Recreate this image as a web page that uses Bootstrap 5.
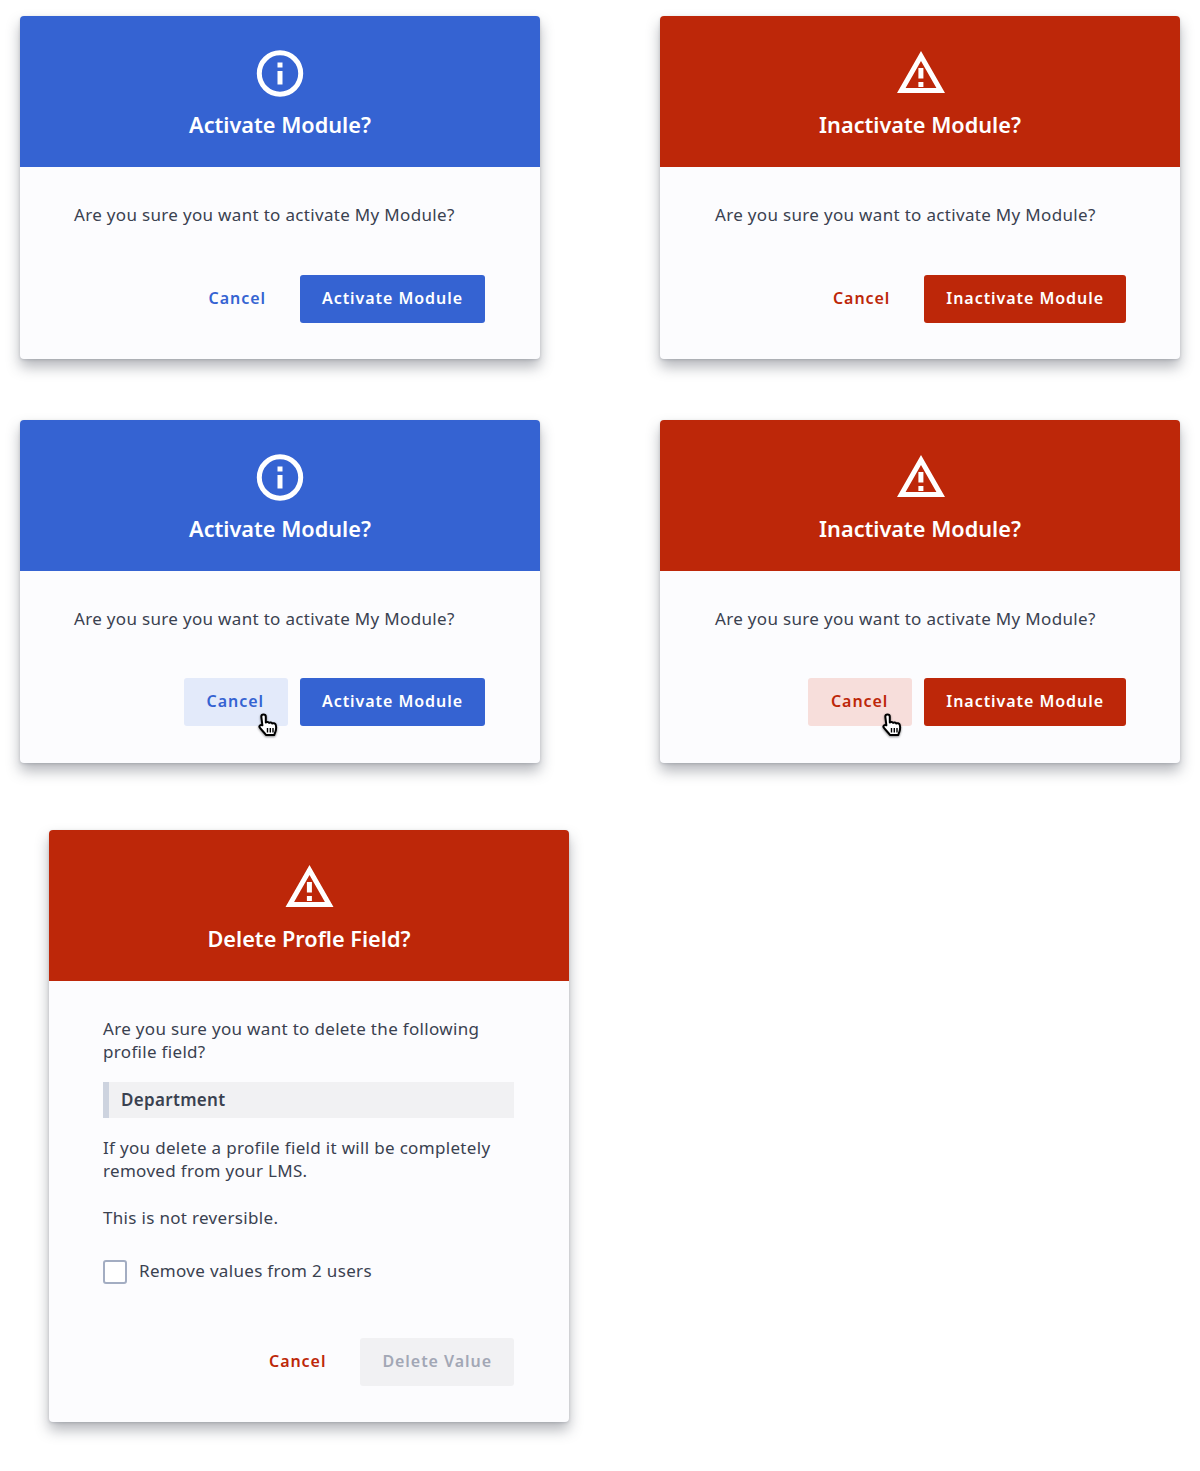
<!DOCTYPE html>
<html lang="en">
<head>
<meta charset="utf-8">
<title>Dialogs</title>
<link href="https://cdn.jsdelivr.net/npm/bootstrap@5.3.0/dist/css/bootstrap.min.css" rel="stylesheet">
<style>
body { margin: 0; background: #fff; font-family: "Noto Sans", sans-serif; color: #3a4150; }
.sheet { padding: 16px 20px 48px 20px; }
.duo { display: grid; grid-template-columns: 520px 520px; justify-content: space-between; row-gap: 61px; }
.duo-last { padding: 67px 0 0 29px; }
.dlg { width: 520px; background: #fcfcfe; border-radius: 4px; box-shadow: 0 8px 14px rgba(50,55,70,.36), 0 1px 3px rgba(50,55,70,.18); overflow: hidden; }
.dlg-head { height: 151px; color: #fff; text-align: center; padding-top: 33px; }
.dlg-head svg { display: block; margin: 0 auto; width: 48px; height: 48px; overflow: visible; }
.dlg-head h2 { font: 600 21.7px/28px "Noto Sans", sans-serif; margin: 14px 0 0; }
.tone-blue .dlg-head { background: #3563d2; }
.tone-red .dlg-head { background: #bd2709; }
.dlg-body { padding: 36px 55px 36px 54px; font-size: 17px; line-height: 23px; letter-spacing: .32px; }
.dlg-right .dlg-body { padding-left: 55px; padding-right: 54px; }
.dlg-right .dlg-head svg { transform: translateX(.5px); }
.dlg-body p { margin: 0; }
.dlg-act { display: flex; justify-content: flex-end; gap: 12px; margin-top: 49px; }
.dlg-act-wide { margin-top: 54px; }
.dlg-act-up { margin-top: 48px; margin-bottom: 1px; }
.act { border: 0; border-radius: 3px; height: 48px; padding: 0 22px 2px; font: 600 16px/46px "Noto Sans", sans-serif; letter-spacing: .95px; background: transparent; position: relative; }
.act-cancel { padding: 0 22px 2px 23px; }
.tone-blue .act-cancel { color: #3563d2; }
.tone-red .act-cancel { color: #bd2709; }
.tone-blue .act-main { background: #3563d2; color: #fff; }
.tone-red .act-main { background: #bd2709; color: #fff; }
.tone-blue .act-hover { background: #e3eafa; }
.tone-red .act-hover { background: #f7dedb; }
.act-hover { padding: 0 24px 2px 23px; }
.act-off { background: #f1f1f3 !important; color: #a2a7b5 !important; }
.hand { position: absolute; left: 74px; top: 35px; width: 20px; height: 24px; overflow: visible; filter: drop-shadow(0 1px 1px rgba(0,0,0,.45)); }
.quote { background: #f1f1f3; border-left: 6px solid #cdd3df; height: 36px; line-height: 36px; padding-left: 12px; font-weight: 600; margin: 19px 0 18px; }
.chk { display: flex; align-items: center; gap: 12px; margin-top: 31px; }
.chk-box { width: 24px; height: 24px; border: 2px solid #a3adc2; border-radius: 3px; background: #fff; }
.chk-text { line-height: 21px; margin-bottom: 3px; }
</style>
</head>
<body>
<svg width="0" height="0" class="position-absolute">
<defs>
<symbol id="ico-info" viewBox="0 0 48 48" overflow="visible"><circle cx="24" cy="24.500" r="20.700" fill="none" stroke="#fff" stroke-width="5"/><rect x="21.500" y="22" width="5" height="13.500" fill="#fff"/><rect x="21.500" y="13.500" width="5" height="5" fill="#fff"/></symbol>
<symbol id="ico-warn" viewBox="0 0 48 48" overflow="visible"><path fill-rule="evenodd" d="M24.500 2 L48.500 44 H.5 Z M24.500 12 L9.100 39 H39.900 Z" fill="#fff"/><rect x="21.900" y="19" width="5" height="10.500" fill="#fff"/><rect x="21.900" y="33" width="5" height="5" fill="#fff"/></symbol>
<symbol id="ico-hand" viewBox="0 0 20 24" overflow="visible"><path d="M5.500 1.500c1.300 0 2.300 1 2.300 2.200V9.500c.8-.8 2.800-.7 3.300.4.800-.7 2.700-.5 3.200.6.900-.6 2.800-.2 3.300 1 .7 1.800.5 5-.1 7-.4 1.300-.9 2.200-1.200 3.500H8C6.700 20 3 16.500 1.700 14.500c-1-1.600.8-3.300 2.700-2.200L3.300 3.700c0-1.200 1-2.200 2.200-2.200z" fill="#fff" stroke="#000" stroke-width="2" stroke-linejoin="round"/><path d="M9.500 15v4.500M12.300 15v4.500M15 15v4.500" stroke="#000" stroke-width="1.400" fill="none"/></symbol>
</defs>
</svg>
<div class="sheet">
<div class="duo">
<section class="dlg tone-blue">
<div class="dlg-head"><svg><use href="#ico-info"/></svg><h2>Activate Module?</h2></div>
<div class="dlg-body"><p>Are you sure you want to activate My Module?</p>
<div class="dlg-act"><button class="act act-cancel">Cancel</button><button class="act act-main">Activate Module</button></div></div>
</section>
<section class="dlg dlg-right tone-red">
<div class="dlg-head"><svg><use href="#ico-warn"/></svg><h2>Inactivate Module?</h2></div>
<div class="dlg-body"><p>Are you sure you want to activate My Module?</p>
<div class="dlg-act"><button class="act act-cancel">Cancel</button><button class="act act-main">Inactivate Module</button></div></div>
</section>
<section class="dlg tone-blue">
<div class="dlg-head"><svg><use href="#ico-info"/></svg><h2>Activate Module?</h2></div>
<div class="dlg-body"><p>Are you sure you want to activate My Module?</p>
<div class="dlg-act dlg-act-up"><button class="act act-cancel act-hover">Cancel<svg class="hand"><use href="#ico-hand"/></svg></button><button class="act act-main">Activate Module</button></div></div>
</section>
<section class="dlg dlg-right tone-red">
<div class="dlg-head"><svg><use href="#ico-warn"/></svg><h2>Inactivate Module?</h2></div>
<div class="dlg-body"><p>Are you sure you want to activate My Module?</p>
<div class="dlg-act dlg-act-up"><button class="act act-cancel act-hover">Cancel<svg class="hand"><use href="#ico-hand"/></svg></button><button class="act act-main">Inactivate Module</button></div></div>
</section>
</div>
<div class="duo-last">
<section class="dlg tone-red">
<div class="dlg-head"><svg><use href="#ico-warn"/></svg><h2>Delete Profle Field?</h2></div>
<div class="dlg-body"><p>Are you sure you want to delete the following profile field?</p>
<div class="quote">Department</div>
<p>If you delete a profile field it will be completely removed from your LMS.</p>
<p class="mt-4">This is not reversible.</p>
<div class="chk"><span class="chk-box"></span><span class="chk-text">Remove values from 2 users</span></div>
<div class="dlg-act dlg-act-wide"><button class="act act-cancel">Cancel</button><button class="act act-off">Delete Value</button></div></div>
</section>
</div>
</div>
</body>
</html>
